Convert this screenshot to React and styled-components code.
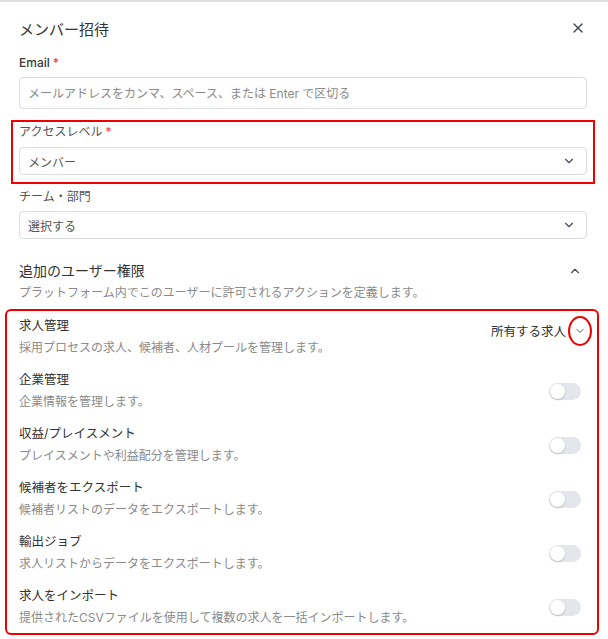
import React, { useState } from "react";
import styled, { createGlobalStyle } from "styled-components";
import { ChevronDown, ChevronUp, X } from "lucide-react";

const GlobalStyle = createGlobalStyle`
  body {
    margin: 0;
    background: #ffffff;
    font-family: Inter, "Noto Sans CJK JP", sans-serif;
    color: #333333;
  }
`;

const Dialog = styled.div`
  border-top: 2px solid #dedde3;
  padding: 0 0 7px;
  width: 608px;
  box-sizing: border-box;
`;

const Header = styled.div`
  display: flex;
  align-items: center;
  justify-content: space-between;
  height: 52px;
  padding: 0 22px 0 19px;
  box-sizing: border-box;
`;

const Title = styled.h2`
  margin: 0;
  font-size: 15px;
  font-weight: 400;
  color: #333333;
`;

const CloseButton = styled.button`
  border: 0;
  background: none;
  padding: 0;
  display: flex;
  color: #444a57;
  cursor: pointer;
`;

const Field = styled.div`
  padding: 0 21px 0 19px;
  margin-top: ${(p) => p.$top || 0}px;
`;

const Highlight = styled.div`
  margin: 11px 13px 0 11px;
  border: 2px solid #ee0000;
  padding: 1px 6px 7px;
`;

const Label = styled.label`
  display: block;
  font-size: 12px;
  line-height: 18px;
  font-weight: ${(p) => (p.$strong ? 500 : 400)};
  color: ${(p) => (p.$strong ? "#3a3a3a" : "#555555")};
`;

const Required = styled.span`
  color: #ef4444;
  margin-left: 3px;
`;

const Input = styled.input`
  display: block;
  width: 100%;
  box-sizing: border-box;
  height: 32px;
  margin-top: 5px;
  border: 1px solid #d9dce1;
  border-radius: 4px;
  padding: 0 8px;
  font-family: Inter, "Noto Sans CJK JP", sans-serif;
  font-size: 12px;
  color: #333333;
  &::placeholder {
    color: #8a8a8a;
  }
`;

const Select = styled.div`
  display: flex;
  align-items: center;
  justify-content: space-between;
  height: 28px;
  margin-top: ${(p) => p.$top || 5}px;
  border: 1px solid #d9dce1;
  border-radius: 4px;
  padding: 0 10px 0 8px;
  font-size: 12px;
  color: #555555;
  box-sizing: border-box;
`;

const SectionHead = styled.div`
  display: flex;
  align-items: center;
  justify-content: space-between;
  padding: 0 26px 0 19px;
  margin-top: 22px;
`;

const SectionTitle = styled.div`
  font-size: 14px;
  line-height: 20px;
  color: #333333;
`;

const SectionDesc = styled.div`
  padding: 0 19px;
  margin-top: 3px;
  font-size: 12px;
  line-height: 18px;
  color: #8a8a8a;
`;

const PermBox = styled.div`
  margin: 7px 9px 0 5px;
  border: 2px solid #ee0000;
  border-radius: 6px;
  padding: 6px 16px 6px 12px;
  display: flex;
  flex-direction: column;
  gap: 14px;
`;

const PermRow = styled.div`
  display: flex;
  align-items: center;
  justify-content: space-between;
`;

const PermText = styled.div`
  display: flex;
  flex-direction: column;
  gap: 4px;
`;

const PermTitle = styled.div`
  font-size: 12.5px;
  line-height: 18px;
  color: #333333;
`;

const PermDesc = styled.div`
  font-size: 12px;
  line-height: 18px;
  color: #8a8a8a;
`;

const Scope = styled.div`
  align-self: flex-start;
  display: flex;
  align-items: center;
  gap: 2px;
  margin-right: -11px;
  font-size: 12.5px;
  line-height: 18px;
  color: #333333;
`;

const Circled = styled.span`
  display: flex;
  align-items: center;
  justify-content: center;
  width: 20px;
  height: 26px;
  margin-top: -1px;
  border: 2px solid #ee0000;
  border-radius: 50%;
  color: #444a57;
`;

const Track = styled.button`
  position: relative;
  width: 32px;
  height: 17px;
  border: 0;
  padding: 0;
  border-radius: 9px;
  background: ${(p) => (p.$on ? "#2563eb" : "#e3e6eb")};
  cursor: pointer;
`;

const Knob = styled.span`
  position: absolute;
  top: 1px;
  left: ${(p) => (p.$on ? 16 : 1)}px;
  width: 15px;
  height: 15px;
  border-radius: 50%;
  background: #ffffff;
  box-shadow: 0 1px 2px rgba(0, 0, 0, 0.2);
`;

const Toggle = () => {
  const [on, setOn] = useState(false);
  return (
    <Track $on={on} onClick={() => setOn(!on)}>
      <Knob $on={on} />
    </Track>
  );
};

const permissions = [
  { title: "企業管理", desc: "企業情報を管理します。" },
  { title: "収益/プレイスメント", desc: "プレイスメントや利益配分を管理します。" },
  { title: "候補者をエクスポート", desc: "候補者リストのデータをエクスポートします。" },
  { title: "輸出ジョブ", desc: "求人リストからデータをエクスポートします。" },
  {
    title: "求人をインポート",
    desc: "提供されたCSVファイルを使用して複数の求人を一括インポートします。",
  },
];

export default function App() {
  return (
    <>
      <GlobalStyle />
      <Dialog>
        <Header>
          <Title>メンバー招待</Title>
          <CloseButton>
            <X size={16} strokeWidth={2.2} />
          </CloseButton>
        </Header>

        <Field>
          <Label $strong>
            Email<Required>*</Required>
          </Label>
          <Input placeholder="メールアドレスをカンマ、スペース、または Enter で区切る" />
        </Field>

        <Highlight>
          <Label>
            アクセスレベル<Required>*</Required>
          </Label>
          <Select $top={6}>
            メンバー
            <ChevronDown size={14} strokeWidth={2} color="#444a57" />
          </Select>
        </Highlight>

        <Field $top={4}>
          <Label>チーム・部門</Label>
          <Select>
            選択する
            <ChevronDown size={14} strokeWidth={2} color="#444a57" />
          </Select>
        </Field>

        <SectionHead>
          <SectionTitle>追加のユーザー権限</SectionTitle>
          <ChevronUp size={14} strokeWidth={2} color="#444a57" />
        </SectionHead>
        <SectionDesc>
          プラットフォーム内でこのユーザーに許可されるアクションを定義します。
        </SectionDesc>

        <PermBox>
          <PermRow>
            <PermText>
              <PermTitle>求人管理</PermTitle>
              <PermDesc>採用プロセスの求人、候補者、人材プールを管理します。</PermDesc>
            </PermText>
            <Scope>
              所有する求人
              <Circled>
                <ChevronDown size={12} strokeWidth={2} />
              </Circled>
            </Scope>
          </PermRow>
          {permissions.map((p) => (
            <PermRow key={p.title}>
              <PermText>
                <PermTitle>{p.title}</PermTitle>
                <PermDesc>{p.desc}</PermDesc>
              </PermText>
              <Toggle />
            </PermRow>
          ))}
        </PermBox>
      </Dialog>
    </>
  );
}
